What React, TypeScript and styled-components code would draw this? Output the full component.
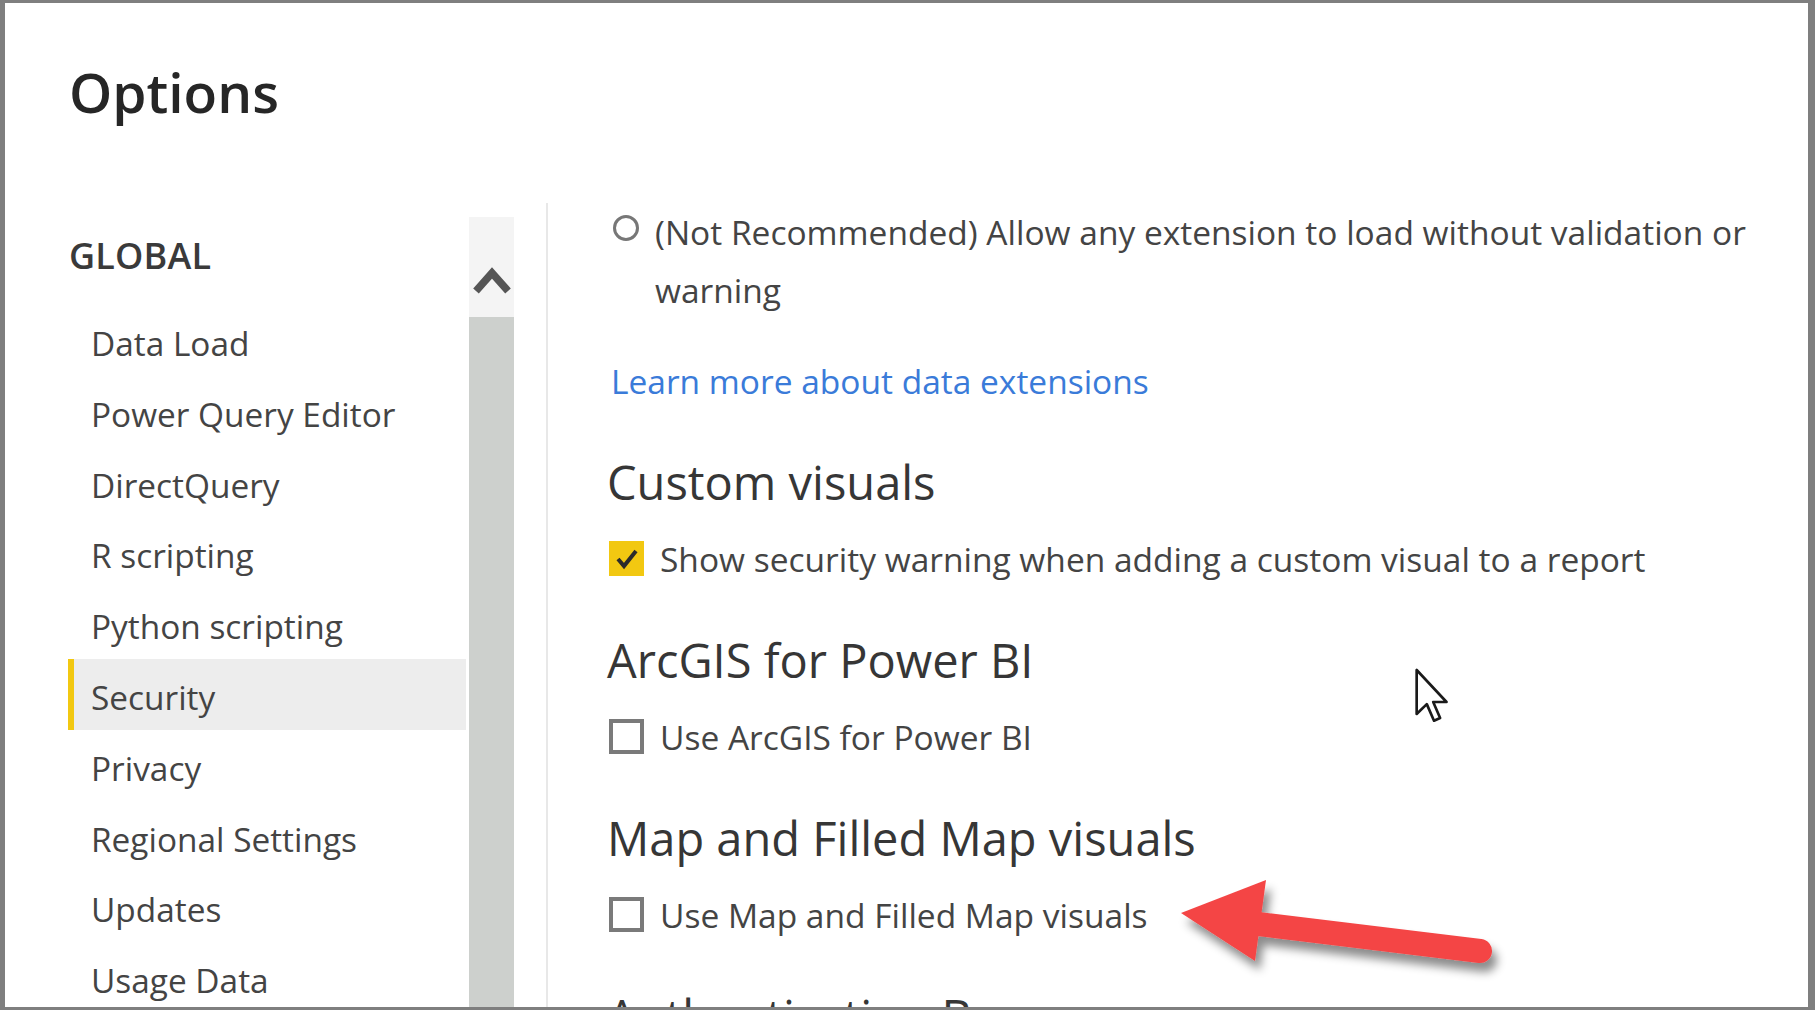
import React, { FC } from 'react'
import styled, { createGlobalStyle } from 'styled-components'

const GlobalStyle = createGlobalStyle`
  html, body {
    margin: 0;
    padding: 0;
    background: #7f7f7f;
    font-family: 'Open Sans', 'Noto Sans', 'Liberation Sans', sans-serif;
  }
`

const FRAME = styled.div`
  position: relative;
  margin: 3px 7px 3px 5px;
  height: 1004px;
  background: #ffffff;
  overflow: hidden;
`

const TITLE = styled.h1`
  margin: 0;
  padding: 51px 0 0 64px;
  font-size: 55px;
  line-height: 75px;
  font-weight: 600;
  color: #262626;
`

const BODY = styled.div`
  display: flex;
  align-items: stretch;
  margin-top: 74px;
  height: 820px;
`

const SIDEBAR = styled.div`
  display: flex;
  padding-left: 63px;
`

const NAV = styled.nav`
  width: 398px;
  padding-top: 28px;
`

const NAV_HEADING = styled.div`
  padding-left: 1px;
  margin-bottom: 25px;
  font-size: 36px;
  line-height: 49px;
  font-weight: 600;
  color: #3a3a3a;
  letter-spacing: 0.2px;
`

const NAV_ITEM = styled.div<{ $active?: boolean }>`
  height: 67.8px;
  padding-top: 3px;
  line-height: 70.8px;
  padding-left: 17px;
  border-left: 6px solid ${({ $active }) => ($active ? '#f2c811' : 'transparent')};
  background: ${({ $active }) => ($active ? '#ededed' : 'transparent')};
  font-size: 33.4px;
  color: #444444;
  white-space: nowrap;
`

const SCROLL_TRACK = styled.div`
  display: flex;
  flex-direction: column;
  width: 45px;
  margin: 14px 0 0 3px;
`

const SCROLL_BUTTON = styled.div`
  display: flex;
  justify-content: center;
  height: 100px;
  padding-top: 50px;
  box-sizing: border-box;
  background: #f4f4f4;
`

const SCROLL_THUMB = styled.div`
  flex: 1;
  background: #cdd0cd;
`

const DIVIDER = styled.div`
  width: 2px;
  margin-left: 32px;
  background: #e8e8e8;
`

const CONTENT = styled.div`
  flex: 1;
  padding: 0 13px 0 59px;
  font-size: 33.5px;
  color: #444444;
`

const RADIO_ROW = styled.div`
  display: flex;
  align-items: flex-start;
  gap: 16px;
  padding-left: 6px;
`

const RADIO = styled.span`
  flex: none;
  width: 26px;
  height: 26px;
  margin-top: 12px;
  box-sizing: border-box;
  border: 3.5px solid #777777;
  border-radius: 50%;
`

const OPTION_TEXT = styled.div`
  line-height: 58px;
`

const LINK = styled.a`
  display: block;
  margin-top: 33px;
  padding-left: 4px;
  line-height: 58px;
  color: #3a7bd9;
  text-decoration: none;
`

const SECTION_HEADING = styled.h2`
  margin: 40px 0 0;
  font-size: 47px;
  line-height: 64px;
  font-weight: 400;
  color: #363636;
`

const CHECK_ROW = styled.label`
  display: flex;
  align-items: flex-start;
  gap: 16px;
  margin-top: 16px;
  padding-left: 2px;
  line-height: 58px;
`

const CHECKBOX = styled.span<{ $checked?: boolean }>`
  flex: none;
  display: flex;
  align-items: center;
  justify-content: center;
  width: 35px;
  height: 35px;
  margin-top: 11px;
  box-sizing: border-box;
  border: ${({ $checked }) => ($checked ? 'none' : '4px solid #7a7a7a')};
  background: ${({ $checked }) => ($checked ? '#f2c811' : '#ffffff')};
`

const CURSOR = styled.svg`
  position: absolute;
  left: 1409px;
  top: 664px;
`

const ARROW = styled.svg`
  position: absolute;
  left: 1155px;
  top: 857px;
  overflow: visible;
`

const navItems = [
  'Data Load',
  'Power Query Editor',
  'DirectQuery',
  'R scripting',
  'Python scripting',
  'Security',
  'Privacy',
  'Regional Settings',
  'Updates',
  'Usage Data'
]

const ChevronUp: FC = () => (
  <svg width="38" height="28" viewBox="0 0 38 28">
    <polyline points="3,24 19,6 35,24" fill="none" stroke="#555555" strokeWidth="7.5" strokeLinejoin="miter" />
  </svg>
)

const CheckMark: FC = () => (
  <svg width="26" height="24" viewBox="0 0 26 24">
    <polyline points="4,12 10,19 22,4" fill="none" stroke="#2b2b2b" strokeWidth="4" />
  </svg>
)

const Option: FC<{ checked?: boolean; label: string }> = ({ checked, label }) => (
  <CHECK_ROW>
    <CHECKBOX $checked={checked}>{checked && <CheckMark />}</CHECKBOX>
    <span>{label}</span>
  </CHECK_ROW>
)

export default function App() {
  return (
    <>
      <GlobalStyle />
      <FRAME>
        <TITLE>Options</TITLE>
        <BODY>
          <SIDEBAR>
            <NAV>
              <NAV_HEADING>GLOBAL</NAV_HEADING>
              {navItems.map((item) => (
                <NAV_ITEM key={item} $active={item === 'Security'}>
                  {item}
                </NAV_ITEM>
              ))}
            </NAV>
            <SCROLL_TRACK>
              <SCROLL_BUTTON>
                <ChevronUp />
              </SCROLL_BUTTON>
              <SCROLL_THUMB />
            </SCROLL_TRACK>
          </SIDEBAR>
          <DIVIDER />
          <CONTENT>
            <RADIO_ROW>
              <RADIO />
              <OPTION_TEXT>(Not Recommended) Allow any extension to load without validation or warning</OPTION_TEXT>
            </RADIO_ROW>
            <LINK href="#">Learn more about data extensions</LINK>
            <SECTION_HEADING>Custom visuals</SECTION_HEADING>
            <Option checked label="Show security warning when adding a custom visual to a report" />
            <SECTION_HEADING>ArcGIS for Power BI</SECTION_HEADING>
            <Option label="Use ArcGIS for Power BI" />
            <SECTION_HEADING>Map and Filled Map visuals</SECTION_HEADING>
            <Option label="Use Map and Filled Map visuals" />
            <SECTION_HEADING>Authentication Browser</SECTION_HEADING>
          </CONTENT>
        </BODY>

        {/* mouse pointer */}
        <CURSOR width="36" height="58" viewBox="0 0 13.5 21.5">
          <polygon
            points="1,1 1,17.5 4.8,13.8 7.5,20 9.8,19 7.2,13 12.2,13"
            fill="#ffffff"
            stroke="#1a1a1a"
            strokeWidth="1"
            strokeLinejoin="round"
          />
        </CURSOR>

        {/* red annotation arrow */}
        <ARROW width="360" height="130" viewBox="0 0 360 130">
          <defs>
            <filter id="arrowShadow" x="-20%" y="-30%" width="140%" height="180%">
              <feDropShadow dx="5" dy="9" stdDeviation="5" floodColor="#000000" floodOpacity="0.45" />
            </filter>
          </defs>
          <g filter="url(#arrowShadow)" fill="#f44545">
            <line x1="90" y1="63" x2="320" y2="91" stroke="#f44545" strokeWidth="24" strokeLinecap="round" />
            <polygon points="21,53 106,20 95,101" />
          </g>
        </ARROW>
      </FRAME>
    </>
  )
}
